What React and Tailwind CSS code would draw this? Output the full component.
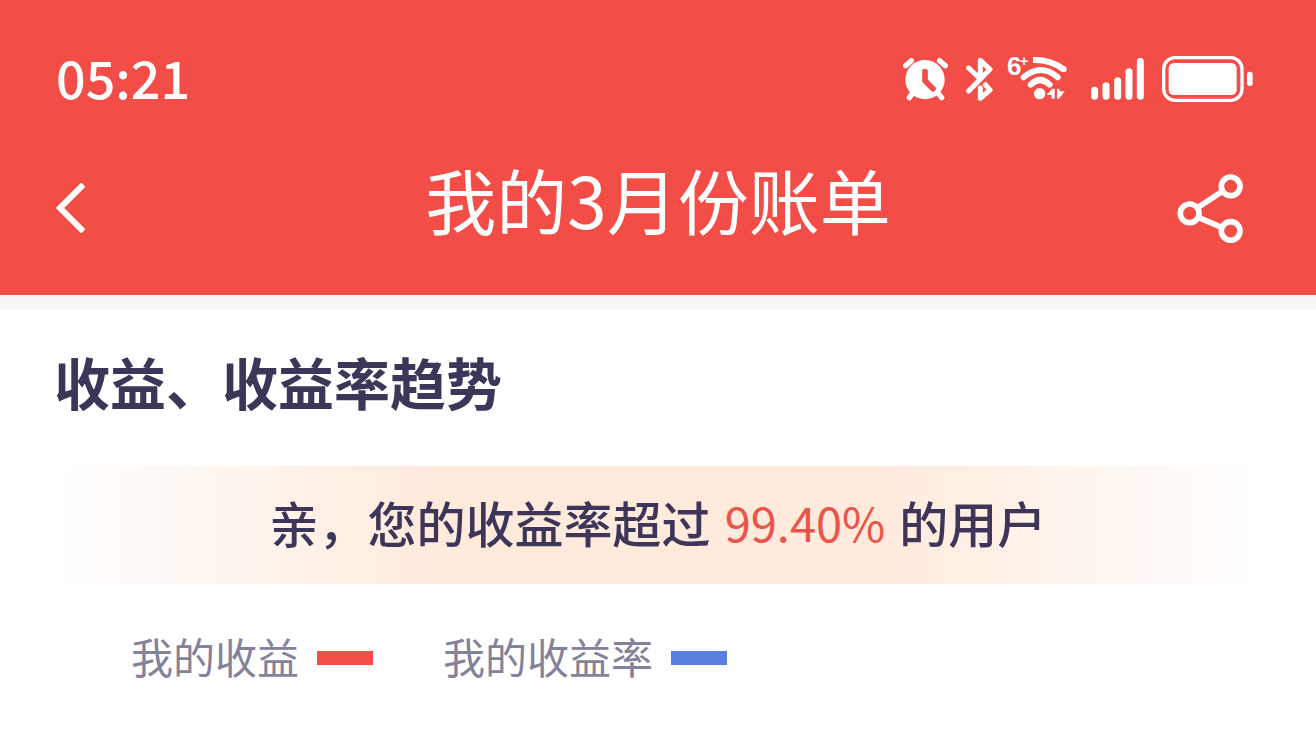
const LEGEND = [
  { label: '我的收益',   bar: 'bg-[#f24d46]' },
  { label: '我的收益率', bar: 'bg-[#587fdf]' },
]

function AlarmIcon() {
  return (
    <svg viewBox="36 50 135 132" className="w-[45px] h-[44px]" fill="none" stroke="currentColor" strokeWidth="16" strokeLinecap="round">
      <circle cx="102" cy="118" r="59" fill="currentColor" stroke="none" />
      <path d="M44 76 61 61M146 61l17 15M67 156l-12 16M139 156l13 16" />
      <path d="M102 94v27l24 24" stroke="#f24d46" strokeWidth="17" strokeLinejoin="round" />
    </svg>
  )
}

function BluetoothIcon() {
  return (
    <svg viewBox="225 50 81 132" className="w-[27px] h-[44px]" fill="none" stroke="currentColor" strokeWidth="15" strokeLinecap="round" strokeLinejoin="round">
      <path d="M233 83l35 33V60l29 27-64 65" />
      <path d="M268 143v31l29-25-14-16" />
    </svg>
  )
}

function WifiIcon() {
  return (
    <svg viewBox="350 21 180 192" className="w-[60px] h-[64px]" fill="none" stroke="currentColor" strokeWidth="18">
      <text x="350" y="105" fontSize="78" fill="currentColor" stroke="none" fontFamily="'Liberation Sans', sans-serif" fontWeight="700">
        6<tspan fontSize="46" dx="-6" dy="-28">+</tspan>
      </text>
      <path d="M428 60Q480 58 520 88" />
      <path d="M520 88h0M400 112q52-44 102 0M421 134q28-28 57 0" strokeLinecap="round" />
      <g fill="currentColor" stroke="none">
        <circle cx="448" cy="161" r="17" />
        <path d="M469 165l17-19h7v30h-9v-11zM500 146h7v8h16l-17 22h-6z" />
      </g>
    </svg>
  )
}

function SignalIcon() {
  return (
    <svg viewBox="32 51 159 126" className="w-[53px] h-[42px]" stroke="currentColor" strokeWidth="21" strokeLinecap="round">
      <path d="M43 148v18M77 134v32M112 119v47M146 92v74M180 61v105" />
    </svg>
  )
}

function BatteryIcon() {
  return (
    <svg viewBox="247 45 273 138" className="w-[91px] h-[46px]" fill="currentColor">
      <rect x="252" y="50" width="235" height="128" rx="34" fill="none" stroke="currentColor" strokeWidth="10" />
      <rect x="267" y="66" width="204" height="96" rx="16" />
      <rect x="502" y="92" width="17" height="43" rx="8" />
    </svg>
  )
}

function BackIcon() {
  return (
    <svg viewBox="76 430 90 150" className="w-[30px] h-[50px]" fill="none" stroke="currentColor" strokeWidth="18">
      <path d="M158 435 88 505l70 70" />
    </svg>
  )
}

function ShareIcon() {
  return (
    <svg viewBox="48 42 201 207" className="w-[67px] h-[69px]" fill="none" stroke="currentColor" strokeWidth="17">
      <circle cx="209" cy="79" r="28" />
      <circle cx="86" cy="160" r="28" />
      <circle cx="209" cy="213" r="28" />
      <path d="M111 142l73-48M113 173l69 29" />
    </svg>
  )
}

function StatusBar() {
  return (
    <div className="flex items-center justify-between h-[157px] pl-14 pr-[63px]">
      <span className="pb-1 text-[52px] leading-none font-medium">05:21</span>
      <div className="flex items-center">
        <AlarmIcon />
        <div className="ml-[18px]"><BluetoothIcon /></div>
        <div className="ml-[14px]"><WifiIcon /></div>
        <div className="ml-6"><SignalIcon /></div>
        <div className="ml-[18px]"><BatteryIcon /></div>
      </div>
    </div>
  )
}

export default function App() {
  return (
    <div className="min-h-screen bg-white text-[#3d3658] font-['Noto_Sans_CJK_SC',sans-serif]">
      <header className="bg-[#f24d46] text-white pb-9">
        <StatusBar />
        <div className="grid grid-cols-[1fr_auto_1fr] items-center h-[102px] px-14">
          <button type="button" aria-label="返回" className="justify-self-start">
            <BackIcon />
          </button>
          <h1 className="pb-5 text-[71px] leading-none">我的3月份账单</h1>
          <button type="button" aria-label="分享" className="justify-self-end pr-4">
            <ShareIcon />
          </button>
        </div>
      </header>

      <main className="border-t-[14px] border-[#f7f8fa] px-[54px] pt-11">
        <h2 className="text-[56px] leading-[56px] font-bold">收益、收益率趋势</h2>

        <p className="mt-[57px] h-[118px] pb-2 flex items-center justify-center whitespace-pre text-[49px] leading-none font-medium bg-[linear-gradient(90deg,#fff,#ffeadc_32%,#ffeadc_68%,#fff)]">
          亲，您的收益率超过 <span className="mx-[3px] text-[47px] font-normal text-[#e9554a]">99.40%</span> 的用户
        </p>

        <ul className="flex gap-[70px] mt-[51px] pl-[77px]">
          {LEGEND.map(item => (
            <li key={item.label} className="flex items-center gap-[18px] text-[42px] leading-[42px] text-[#83829a]">
              <span className="pb-1">{item.label}</span>
              <span className={`w-14 h-[14px] ${item.bar}`} />
            </li>
          ))}
        </ul>
      </main>
    </div>
  )
}
